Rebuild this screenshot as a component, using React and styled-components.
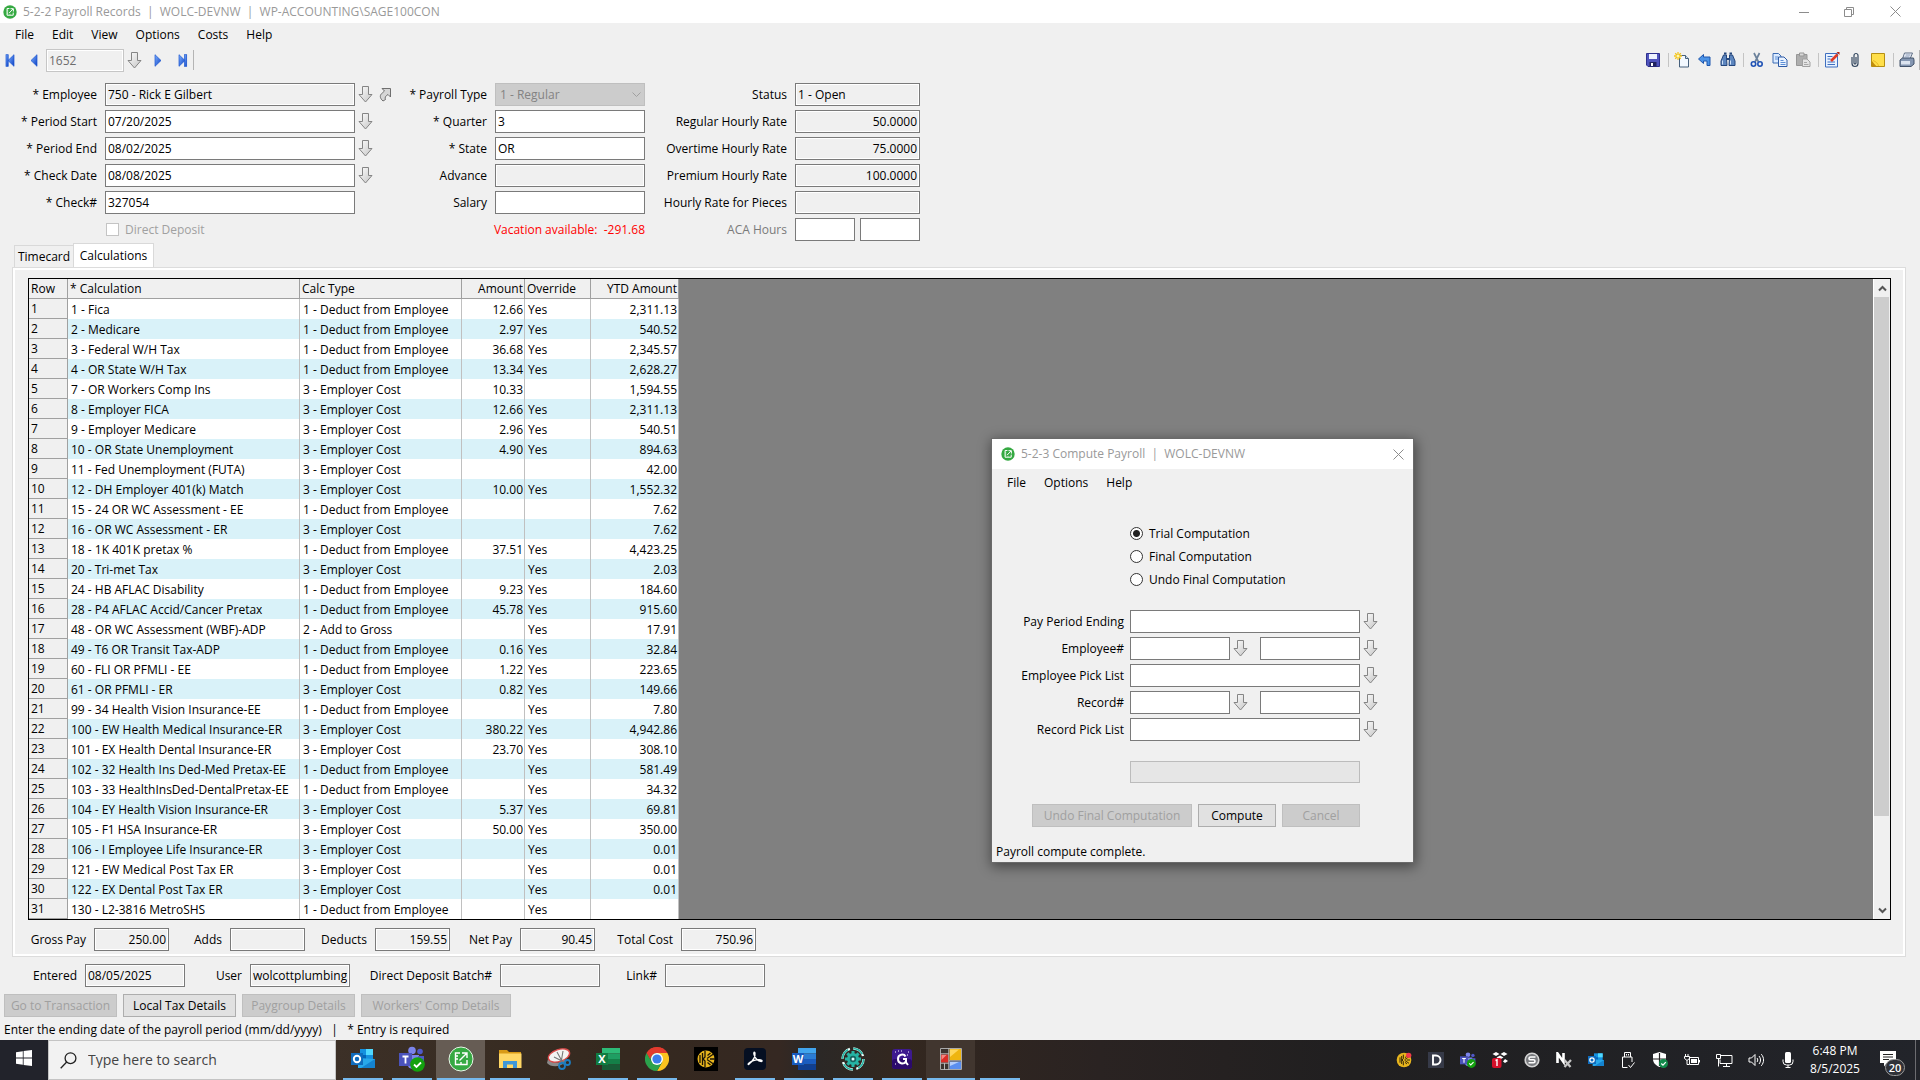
import { useState } from "react";
import styled, { createGlobalStyle } from "styled-components";

const calcTypes = {
    1: '1 - Deduct from Employee',
    2: '2 - Add to Gross',
    3: '3 - Employer Cost',
};

const calculations = [
    ['1 - Fica', 1, '12.66', 'Yes', '2,311.13'],
    ['2 - Medicare', 1, '2.97', 'Yes', '540.52'],
    ['3 - Federal W/H Tax', 1, '36.68', 'Yes', '2,345.57'],
    ['4 - OR State W/H Tax', 1, '13.34', 'Yes', '2,628.27'],
    ['7 - OR Workers Comp Ins', 3, '10.33', '', '1,594.55'],
    ['8 - Employer FICA', 3, '12.66', 'Yes', '2,311.13'],
    ['9 - Employer Medicare', 3, '2.96', 'Yes', '540.51'],
    ['10 - OR State Unemployment', 3, '4.90', 'Yes', '894.63'],
    ['11 - Fed Unemployment (FUTA)', 3, '', '', '42.00'],
    ['12 - DH Employer 401(k) Match', 3, '10.00', 'Yes', '1,552.32'],
    ['15 - 24 OR WC Assessment - EE', 1, '', '', '7.62'],
    ['16 - OR WC Assessment - ER', 3, '', '', '7.62'],
    ['18 - 1K 401K pretax %', 1, '37.51', 'Yes', '4,423.25'],
    ['20 - Tri-met Tax', 3, '', 'Yes', '2.03'],
    ['24 - HB AFLAC Disability', 1, '9.23', 'Yes', '184.60'],
    ['28 - P4 AFLAC Accid/Cancer Pretax', 1, '45.78', 'Yes', '915.60'],
    ['48 - OR WC Assessment (WBF)-ADP', 2, '', 'Yes', '17.91'],
    ['49 - T6 OR Transit Tax-ADP', 1, '0.16', 'Yes', '32.84'],
    ['60 - FLI OR PFMLI - EE', 1, '1.22', 'Yes', '223.65'],
    ['61 - OR PFMLI - ER', 3, '0.82', 'Yes', '149.66'],
    ['99 - 34 Health Vision Insurance-EE', 1, '', 'Yes', '7.80'],
    ['100 - EW Health Medical Insurance-ER', 3, '380.22', 'Yes', '4,942.86'],
    ['101 - EX Health Dental Insurance-ER', 3, '23.70', 'Yes', '308.10'],
    ['102 - 32 Health Ins Ded-Med Pretax-EE', 1, '', 'Yes', '581.49'],
    ['103 - 33 HealthInsDed-DentalPretax-EE', 1, '', 'Yes', '34.32'],
    ['104 - EY Health Vision Insurance-ER', 3, '5.37', 'Yes', '69.81'],
    ['105 - F1 HSA Insurance-ER', 3, '50.00', 'Yes', '350.00'],
    ['106 - I Employee Life Insurance-ER', 3, '', 'Yes', '0.01'],
    ['121 - EW Medical Post Tax ER', 3, '', 'Yes', '0.01'],
    ['122 - EX Dental Post Tax ER', 3, '', 'Yes', '0.01'],
    ['130 - L2-3816 MetroSHS', 1, '', 'Yes', ''],
];

const totals = [
    { id: 'gross', label: 'Gross Pay', value: '250.00', width: 58 },
    { id: 'adds', label: 'Adds', value: '', width: 45 },
    { id: 'deducts', label: 'Deducts', value: '159.55', width: 54 },
    { id: 'net', label: 'Net Pay', value: '90.45', width: 54 },
    { id: 'total', label: 'Total Cost', value: '750.96', width: 70 },
];

const GlobalStyle = createGlobalStyle`
    * {
        box-sizing: border-box;
    }

    body {
        margin: 0;
        background: #f0f0f0;
        color: #000;
        font-family: "Open Sans", "Noto Sans", sans-serif;
        font-size: 12px;
        line-height: 16px;
    }

    button, input, select {
        font: inherit;
        color: inherit;
    }
`;

/* ---------- window chrome ---------- */

const Desktop = styled.div`
    min-height: 100vh;
    display: flex;
    flex-direction: column;
`;

const Window = styled.main`
    flex: 1;
    display: flex;
    flex-direction: column;
`;

const TitleBar = styled.header`
    display: flex;
    align-items: center;
    gap: 6px;
    height: ${p => p.$height}px;
    padding-left: ${p => p.$indent}px;
    background: #fff;
    color: #999;

    h1, h2 {
        flex: 1;
        margin: 0;
        font-size: 12px;
        font-weight: 400;
        white-space: pre;
    }
`;

const Captions = styled.div`
    display: flex;
    height: 100%;
`;

const CaptionButton = styled.button`
    display: flex;
    align-items: center;
    justify-content: center;
    width: ${p => p.$width}px;
    height: 100%;
    padding: 0;
    border: 0;
    background: none;
    color: #8c8c8c;
`;

const MenuBar = styled.nav`
    display: flex;
    align-items: center;
    height: ${p => p.$height}px;
    padding-left: 6px;

    button {
        padding: 0 9px;
        border: 0;
        background: none;
    }
`;

const ToolBar = styled.div`
    display: flex;
    align-items: center;
    height: 28px;
`;

const ToolGroup = styled.div`
    display: flex;
    align-items: center;
    gap: 7px;
    height: 14px;
    padding: 0 ${p => p.$last ? 4 : 7}px 0 5px;
    border-left: ${p => p.$first ? '0' : '1px solid #c4c4c4'};
`;

const Spacer = styled.div`
    flex: 1;
`;

const IconButton = styled.button`
    display: flex;
    align-items: center;
    justify-content: center;
    flex: none;
    width: ${p => p.$width || 16}px;
    height: 18px;
    padding: 0;
    border: 0;
    background: none;
`;

const BarEdge = styled.div`
    width: 1px;
    height: 20px;
    background: #b4b4b4;
`;

/* ---------- fields ---------- */

const Field = styled.input`
    width: ${p => p.$width}px;
    height: 23px;
    flex: none;
    padding: 0 2px;
    border: 1px solid #7a7a7a;
    border-radius: 0;
    outline: 0;
    background: ${p => p.readOnly ? '#f0f0f0' : '#fff'};
    box-shadow: inset 0 0 0 1px #fff;
    text-align: ${p => p.$right ? 'right' : 'left'};

    &:disabled {
        border-color: #c6c6c6;
        background: #f0f0f0;
        color: #6d6d6d;
    }
`;

const Select = styled.select`
    width: 150px;
    height: 23px;
    padding: 0 4px;
    border: 1px solid #bfbfbf;
    border-radius: 0;
    appearance: none;
    background: #ccc;
    opacity: 1;

    &:disabled {
        color: #838383;
    }
`;

const SelectBox = styled.div`
    display: grid;

    select, svg {
        grid-area: 1 / 1;
    }

    svg {
        justify-self: end;
        align-self: center;
        margin-right: 4px;
        pointer-events: none;
    }
`;

const Form = styled.form`
    display: flex;
    align-items: flex-start;
    padding-top: 9px;
`;

const FormColumn = styled.div`
    display: grid;
    grid-template-columns: ${p => p.$label}px auto;
    grid-auto-rows: 23px;
    align-items: center;
    gap: 4px 8px;
    width: ${p => p.$width}px;
`;

const Label = styled.label`
    width: ${p => p.$width ? `${p.$width}px` : 'auto'};
    text-align: right;
    white-space: pre;
    color: ${p => p.$muted ? '#7a7a7a' : 'inherit'};
`;

const Controls = styled.div`
    display: flex;
    align-items: center;
    gap: ${p => p.$gap || 3}px;
`;

const CheckLabel = styled.label`
    grid-column: 2;
    display: flex;
    align-items: center;
    gap: 6px;
    padding-left: 1px;
    color: #a0a0a0;
`;

const CheckBox = styled.input`
    appearance: none;
    width: 13px;
    height: 13px;
    margin: 0;
    border: 1px solid #c4c4c4;
    background: #fff;
`;

const Vacation = styled.p`
    grid-column: 1 / -1;
    margin: 0;
    text-align: right;
    white-space: pre;
    color: #f00;
`;

const PushButton = styled.button`
    width: ${p => p.$width}px;
    height: 23px;
    padding: 0;
    border: 1px solid #adadad;
    background: #e1e1e1;

    &:disabled {
        border-color: #bfbfbf;
        background: #ccc;
        color: #a0a0a0;
    }
`;

/* ---------- tabs and grid ---------- */

const TabList = styled.div`
    display: flex;
    align-items: flex-end;
    height: 26px;
    padding-left: 14px;
`;

const Tab = styled.button`
    width: ${p => p.$active ? 81 : 59}px;
    height: ${p => p.$active ? 24 : 22}px;
    padding: 0;
    border: 1px solid #d9d9d9;
    border-bottom: 0;
    border-right-width: ${p => p.$active ? 1 : 0}px;
    background: ${p => p.$active ? '#fff' : '#f0f0f0'};
`;

const TabPanel = styled.section`
    margin: 0 14px 0 12px;
    padding: 10px 14px 5px 15px;
    border: 1px solid #dcdcdc;
    box-shadow: inset 0 0 0 2px #fff;
`;

const Grid = styled.div`
    display: flex;
    border: 1px solid #000;
    background: #808080;
`;

const Table = styled.table`
    flex: none;
    width: 650px;
    table-layout: fixed;
    border-spacing: 0;

    th, td {
        height: 20px;
        padding: 0 3px;
        border-right: 1px solid #c0c0c0;
        font-weight: 400;
        text-align: left;
        white-space: nowrap;
        overflow: hidden;
    }

    th {
        padding: 0 2px;
        border-right-color: #a0a0a0;
        border-bottom: 1px solid #a0a0a0;
        background: #f0f0f0;
    }

    td {
        padding-top: 2px;
        background: #fff;
    }

    tr:nth-child(even) td {
        background: #d9f2f9;
    }

    .number {
        padding-right: 1px;
        text-align: right;
    }
`;

const ScrollBar = styled.div`
    display: flex;
    flex-direction: column;
    width: 17px;
    margin-left: auto;
    border-left: 1px solid #fff;
    background: #f0f0f0;
`;

const ScrollThumb = styled.div`
    flex: 521;
    margin-right: 1px;
    background: #cdcdcd;
`;

const ScrollTrack = styled.div`
    flex: 85;
`;

const Totals = styled.div`
    display: flex;
    gap: 8px;
    align-items: center;
    margin-top: 8px;
`;

const Entry = styled.div`
    display: flex;
    gap: 8px;
    align-items: center;
    margin-top: 7px;
`;

const Actions = styled.div`
    display: flex;
    gap: 6px;
    margin-top: 7px;
    padding-left: 4px;
`;

const Status = styled.p`
    margin: 0;
    padding: 5px 4px 2px;
    white-space: pre;
`;

/* ---------- compute dialog ---------- */

const Dialog = styled.section`
    position: absolute;
    left: 992px;
    top: 439px;
    width: 421px;
    background: #f0f0f0;
    box-shadow: 0 0 0 1px #6a6a6a, 1px 3px 12px 2px rgba(0, 0, 0, 0.45);
`;

const RadioGroup = styled.div`
    margin: 25px 0 19px 138px;
`;

const RadioLabel = styled.label`
    display: flex;
    align-items: center;
    gap: 6px;
    height: 23px;
`;

const Radio = styled.input`
    appearance: none;
    width: 13px;
    height: 13px;
    margin: 0;
    border: 1px solid #333;
    border-radius: 50%;
    background: #fff;

    &:checked {
        background: radial-gradient(circle, #222 3px, #fff 4px);
    }
`;

const DialogFields = styled.div`
    display: grid;
    grid-template-columns: 132px auto;
    grid-auto-rows: 23px;
    align-items: center;
    gap: 4px 6px;
`;

const RangeGap = styled.div`
    width: 6px;
`;

const Progress = styled.div`
    width: 230px;
    height: 22px;
    margin: 20px 0 21px 138px;
    border: 1px solid #bcbcbc;
    background: #e6e6e6;
`;

const DialogActions = styled.div`
    display: flex;
    gap: 6px;
    padding-left: 40px;
    margin-bottom: 12px;
`;

/* ---------- task bar ---------- */

const TaskBar = styled.footer`
    display: flex;
    height: 40px;
    background: linear-gradient(90deg, #22232b 0, #22232b 48px, #3c3027 330px, #35291f 620px, #352822 780px, #2a2827 810px, #33271f 900px, #2a2322 1100px, #201f20 1350px, #22242a 1920px);
    color: #fff;
`;

const StartButton = styled.button`
    width: 48px;
    padding: 0;
    border: 0;
    background: none;
`;

const SearchBox = styled.label`
    display: flex;
    align-items: center;
    gap: 11px;
    width: 288px;
    padding-left: 11px;
    border: 1px solid #c4c4c4;
    background: #f2f2f2;
    color: #333;

    input {
        width: 220px;
        padding: 0;
        border: 0;
        outline: 0;
        background: none;
        font-size: 14px;
    }

    input::placeholder {
        color: #444;
        opacity: 1;
    }
`;

const AppStrip = styled.div`
    display: flex;
    padding-left: 2px;
`;

const AppButton = styled.button`
    width: 49px;
    padding: 0;
    border: 0;
    background: ${p => p.$shade || 'none'};
    display: flex;
    flex-direction: column;
    align-items: center;

    svg {
        flex: 1;
    }

    &::after {
        content: "";
        width: ${p => p.$wide ? 48 : 40}px;
        height: 2px;
        background: ${p => p.$idle ? 'transparent' : '#76b9ed'};
    }
`;

const Tray = styled.div`
    display: flex;
    margin-left: auto;
`;

const TrayButton = styled.button`
    display: flex;
    align-items: center;
    justify-content: center;
    width: 32px;
    padding: 0;
    border: 0;
    background: none;
`;

const Clock = styled.div`
    width: 62px;
    padding-top: 2px;
    text-align: center;
    line-height: 18px;
`;

const Notices = styled.button`
    position: relative;
    width: 50px;
    padding: 0;
    border: 0;
    border-right: 1px solid #6c6c70;
    margin-right: 4px;
    background: none;

    svg {
        display: block;
        margin: 0 0 2px 14px;
    }

    span {
        position: absolute;
        right: 10px;
        bottom: 4px;
        width: 20px;
        height: 17px;
        border: 1px solid #999;
        border-radius: 9px;
        background: #303238;
        font-size: 11px;
        line-height: 15px;
        font-weight: 600;
        color: #fff;
    }
`;

/* ---------- drawings ---------- */

function SageLogo({ size }) {
    return (
        <svg width={size} height={size} viewBox="0 0 24 24">
            <circle cx="12" cy="12" r="11.5" fill="#35a942" />
            <g fill="none" stroke="#fff" strokeWidth="1.7">
                <path d="M11 6H7v11.5h10.5V13" />
                <path d="M10.500 13.800 17 7M12.800 6.300h5v5" />
                <path d="M7 9h2M7 12h2M7 15h2M12 17v-2" strokeWidth="1" />
            </g>
        </svg>
    );
}

function DownArrow() {
    return (
        <svg width="15" height="17" viewBox="0 0 15 17">
            <defs>
                <linearGradient id="arrowFill" x1="0" x2="1" y1="0" y2="1">
                    <stop offset="0" stopColor="#fff" />
                    <stop offset="1" stopColor="#c4c4c4" />
                </linearGradient>
            </defs>
            <path d="M4.500.5h6v8h3.500L7.500 16 1 8.500h3.500z" fill="url(#arrowFill)" stroke="#858585" />
        </svg>
    );
}

function LinkArrow() {
    return (
        <svg width="13" height="15" viewBox="0 0 13 15">
            <path d="M3 1.500h8.500V10L9 7.500c-2.500 1.500-3.500 3-2.500 5L4 14C.5 11 .5 8 3.500 5.800L5.500 4z" fill="#d6d6d6" stroke="#6f6f6f" />
        </svg>
    );
}

function NavIcon({ kind }) {
    const back = kind === 'first' || kind === 'prev';
    const bar = kind === 'first' || kind === 'last';
    return (
        <svg width="11" height="13" viewBox="0 0 11 13">
            <defs>
                <linearGradient id="navFill" x1="0" x2="1" y1="0" y2="1">
                    <stop offset="0" stopColor="#7fb2ff" />
                    <stop offset="1" stopColor="#0b3fc4" />
                </linearGradient>
            </defs>
            <g fill="url(#navFill)" stroke="#1a55d0" strokeWidth=".7">
                <path d={back ? 'M9 .7v11.600L3 6.500z' : 'M2 .7v11.600l6-5.800z'} />
                {bar && <rect x={back ? 1 : 7.500} y=".7" width="2.200" height="11.600" />}
            </g>
        </svg>
    );
}

const toolDrawings = {
    Save: (
        <>
            <path d="M1.500 1.500h13v13H3l-1.500-1.500z" fill="#4f53bd" stroke="#2e318f" />
            <path d="M4 2h8v5H4z" fill="#eef3ff" />
            <path d="M4.500 10h7v4.500h-7z" fill="#20225f" />
            <path d="M6 11h2v3H6z" fill="#fff" />
        </>
    ),
    New: (
        <>
            <path d="M5.500 3.500h6l3 3v8.500h-9z" fill="#f2f8ff" stroke="#46607c" />
            <path d="M11.500 3.500v3h3" fill="#c6daf0" stroke="#46607c" />
            <path d="M4 0v8M0 4h8M1.200 1.200l5.600 5.600M6.800 1.200 1.200 6.800" stroke="#f3c41c" strokeWidth="1.300" />
            <circle cx="4" cy="4" r="1.500" fill="#fff7b0" />
        </>
    ),
    Undo: <path d="M1.500 7 6.500 2.500V5h6.500v8.500h-3V9H6.500v2.500z" fill="#4c93e6" stroke="#1f56ad" />,
    Find: (
        <>
            <path d="M3.500 3h3v3L7 13.500H1V9zM9.500 3h3L15 9v4.500H9L9.500 6z" fill="#5d86bf" stroke="#24467c" />
            <path d="M4 1.500h2.500M9.500 1.500H12M6.500 7h3" stroke="#24467c" strokeWidth="2" />
            <path d="M2.500 8.500v4M10.500 8.500v4" stroke="#cfe1f7" />
        </>
    ),
    Cut: (
        <>
            <path d="M5 1l4.500 9M10.500 1 6 10" stroke="#6b819b" strokeWidth="1.700" />
            <circle cx="4.500" cy="12" r="2.200" fill="none" stroke="#1f52b5" strokeWidth="1.600" />
            <circle cx="11" cy="12" r="2.200" fill="none" stroke="#1f52b5" strokeWidth="1.600" />
        </>
    ),
    Copy: (
        <>
            <path d="M1 1.500h5.500l2.500 2.500v7H1z" fill="#dcebff" stroke="#3c6cb4" />
            <path d="M6.500 5h5.500l3 3v6.500H6.500z" fill="#eaf3ff" stroke="#2e5ba6" />
            <path d="M3 5h3M3 7h3M8.500 8.500h3M8.500 10.500h5M8.500 12.500h5" stroke="#5d8fd6" />
        </>
    ),
    Paste: (
        <>
            <path d="M1.500 2.500h10.500v11H1.500z" fill="#aeaeae" stroke="#979797" />
            <path d="M4.500 1h4.500v3H4.500z" fill="#d8d8d8" stroke="#979797" />
            <path d="M7.500 7h4.500l3 3v4.500H7.500z" fill="#e4e4e4" stroke="#a0a0a0" />
            <path d="M9 10.500h3M9 12.500h4.500" stroke="#a8a8a8" />
        </>
    ),
    Note: (
        <>
            <path d="M1.500 1.500h12V15h-12z" fill="#e8f2ff" stroke="#3f6fc0" />
            <path d="M3.500 4.500h5M3.500 7h3M3.500 10h7.500M3.500 12.500h7.500" stroke="#3f6fc0" />
            <path d="M7 9l6.500-6.500" stroke="#e03a24" strokeWidth="2.600" />
            <path d="M12.500 0h3v3z" fill="#b3200f" />
        </>
    ),
    Attach: (
        <path d="M5 5v6.500a3 3 0 0 0 6 0V3.500a2 2 0 0 0-4 0V11a1 1 0 0 0 2 0V5" fill="none" stroke="#33475f" strokeWidth="1.200" />
    ),
    Sticky: (
        <>
            <path d="M1.500 1.500h13v13h-13z" fill="#ffdf4a" stroke="#b58f12" />
            <path d="M2 9c2 2 2 3.500 5 5.500H2z" fill="#c28d0c" />
            <path d="M3 8.500c3 1 5 3 5.500 5.500" fill="none" stroke="#e9b824" />
        </>
    ),
    Print: (
        <>
            <path d="M5.500 1h8l-2.500 6H3.500z" fill="#f6f9ff" stroke="#5d6d84" />
            <path d="M1 8l2.500-2h11L15 8v4l-3 2.500H1z" fill="#8496b1" stroke="#42526a" />
            <path d="M2 9h9v3.500H2z" fill="#dbe3ef" />
            <path d="M6.500 3h5M5.500 5h5" stroke="#7c8fae" />
        </>
    ),
};

function ToolIcon({ name }) {
    return (
        <IconButton type="button" title={name}>
            <svg width="16" height="16" viewBox="0 0 16 16">{toolDrawings[name]}</svg>
        </IconButton>
    );
}

function OutlookMark({ size }) {
    return (
        <svg width={size} height={size} viewBox="0 0 24 24">
            <path d="M9 2h13v13H9z" fill="#1490df" />
            <path d="M15 2h7v6h-7z" fill="#50d9ff" />
            <path d="M9 8h6v6H9z" fill="#0364b8" />
            <path d="M7 11l17 1v9H7z" fill="#28a8ea" />
            <path d="M24 12v9H10z" fill="#1483d0" />
            <path d="M0 6h12v12H0z" fill="#0f6cbd" />
            <circle cx="6" cy="12" r="3.200" fill="none" stroke="#fff" strokeWidth="1.900" />
        </svg>
    );
}

function TeamsMark({ size }) {
    return (
        <svg width={size} height={size} viewBox="0 0 26 26">
            <circle cx="13" cy="4.500" r="3.800" fill="#7b83eb" />
            <circle cx="21" cy="5.500" r="2.800" fill="#5059c9" />
            <path d="M8 9h12v8a6 6 0 0 1-12 0z" fill="#7b83eb" />
            <path d="M19 10h6v6a4 4 0 0 1-6 3z" fill="#5059c9" />
            <path d="M0 7h13v13H0z" fill="#4b53bc" />
            <path d="M3.500 10.500h6M6.500 10.500v7" stroke="#fff" strokeWidth="1.800" />
            <circle cx="18.500" cy="18.500" r="7.300" fill="#13a10e" />
            <path d="M15 18.500l2.500 2.500 4.500-4.500" fill="none" stroke="#fff" strokeWidth="1.800" />
        </svg>
    );
}

function OfficeMark({ letter, dark, colors }) {
    return (
        <svg width="24" height="22" viewBox="0 0 24 22">
            {colors.map((color, i) => (
                <rect key={color} x="6" y={i * 5.500} width="18" height="5.500" fill={color} />
            ))}
            <rect y="5" width="12" height="12" fill={dark} />
            <text x="6" y="15" fill="#fff" fontSize="11" fontWeight="700" textAnchor="middle">{letter}</text>
        </svg>
    );
}

function KeeperMark({ size, badge }) {
    return (
        <svg width={size} height={size} viewBox="0 0 24 24">
            <rect width="24" height="24" fill={badge ? 'none' : '#000'} />
            <circle cx="12" cy="12" r={badge ? 11 : 8.500} fill="#e8b51d" />
            <g stroke="#1b1507" strokeWidth="1.300" fill="none">
                <path d="M6 8v8M8.500 6v12M11 4v6l-2 2 2 2v6M13 11.500 19.500 7M13 12.500l6.500 4.500M13.500 8.500 16.500 6M13.500 15.500l3 2.500M16 12h5" />
            </g>
            {badge && <circle cx="19" cy="5" r="4" fill="#f03a4b" />}
        </svg>
    );
}

const gearTeeth = [0, 45, 90, 135, 180, 225, 270, 315];

const taskApps = [
    { name: 'Outlook', icon: <OutlookMark size={24} /> },
    { name: 'Teams', icon: <TeamsMark size={26} /> },
    {
        name: 'Sage',
        shade: '#665c54',
        wide: true,
        icon: (
            <svg width="26" height="26" viewBox="0 0 26 26">
                <circle cx="13" cy="13" r="12" fill="#35a942" stroke="#e8f4e8" />
                <path d="M12 7H7.500v11.500H19V14M11.500 14.500 18.500 7.500M14 7h5v5M7.500 10H10M7.500 13H10M13 18v-2" fill="none" stroke="#fff" strokeWidth="1.400" />
            </svg>
        ),
    },
    {
        name: 'File Explorer',
        icon: (
            <svg width="24" height="20" viewBox="0 0 24 20">
                <path d="M1 1h8l2 2h12v5H1z" fill="#d99a16" />
                <path d="M1 4.500h22.500V19H1z" fill="#ffd765" />
                <path d="M5 19v-7h14v7h-4v-3.500H9V19z" fill="#3e97d8" />
            </svg>
        ),
    },
    {
        name: 'Snipping Tool',
        idle: true,
        icon: (
            <svg width="26" height="24" viewBox="0 0 26 24">
                <path d="M2 12c4 5 12 5 17 0v3c-5 6-15 5-18 1z" fill="#8a8a8a" />
                <ellipse cx="13" cy="8.500" rx="11" ry="6" fill="#f3f3f3" stroke="#db4a4a" strokeWidth="1.400" transform="rotate(-18 13 8.500)" />
                <path d="M11 5l6 11M17 4l-2 12M8 10l10 5" stroke="#777" strokeWidth="1.100" />
                <circle cx="16" cy="19" r="3" fill="none" stroke="#1d7dc0" strokeWidth="1.800" />
                <circle cx="21.500" cy="15.500" r="2.500" fill="none" stroke="#1d7dc0" strokeWidth="1.800" />
            </svg>
        ),
    },
    { name: 'Excel', icon: <OfficeMark letter="X" dark="#107c41" colors={['#2dbb77', '#1f9e62', '#148048', '#185c37']} /> },
    {
        name: 'Chrome',
        icon: (
            <svg width="24" height="24" viewBox="0 0 24 24">
                <path d="M12 12 1.600 6A12 12 0 0 1 22.400 6z" fill="#e33b2e" />
                <path d="M12 12V6h10.400A12 12 0 0 1 12 24l5.200-9z" fill="#fcc31e" />
                <path d="M12 12l5.200 3L12 24A12 12 0 0 1 1.600 6l5.200 9z" fill="#2ba24c" />
                <path d="M1.600 6 6.800 15 12 12V6z" fill="#2ba24c" />
                <path d="M1.600 6A12 12 0 0 1 22.400 6H12a6 6 0 0 0-5.500 3.500L5 12z" fill="#e33b2e" />
                <circle cx="12" cy="12" r="6" fill="#fff" />
                <circle cx="12" cy="12" r="4.600" fill="#3b7ded" />
            </svg>
        ),
    },
    { name: 'Keeper', idle: true, icon: <KeeperMark size={24} /> },
    {
        name: 'Acrobat',
        icon: (
            <svg width="22" height="22" viewBox="0 0 22 22">
                <rect width="22" height="22" rx="4" fill="#050f22" />
                <path d="M4.500 16.500C9 13 11.500 9 11 5c-.3-1.600-1.800-.8-1 1.500 1 3.500 4 6.500 7.500 7 1.500-.5 0-2-3-1.800-4 .3-8 1.800-10 3.800-.8 1-.2 1.400.8.5" fill="none" stroke="#fff" strokeWidth="1.300" />
            </svg>
        ),
    },
    { name: 'Word', icon: <OfficeMark letter="W" dark="#185abd" colors={['#41a5ee', '#2b7cd3', '#1a5cbf', '#103f91']} /> },
    {
        name: 'Settings',
        icon: (
            <svg width="24" height="24" viewBox="0 0 24 24">
                <circle cx="12" cy="12" r="10.500" fill="none" stroke="#e9fffc" strokeWidth="2.400" strokeDasharray="13 3.500" />
                <circle cx="12" cy="12" r="10.500" fill="none" stroke="#26b3a4" strokeWidth="1.600" strokeDasharray="11 5.500" />
                <circle cx="12" cy="12" r="6" fill="#26b3a4" />
                {gearTeeth.map(deg => (
                    <rect key={deg} x="10.500" y="4" width="3" height="4" fill="#26b3a4" transform={`rotate(${deg} 12 12)`} />
                ))}
                <circle cx="12" cy="12" r="3.200" fill="#17645f" />
                <circle cx="12" cy="12" r="1.500" fill="#dff" />
            </svg>
        ),
    },
    {
        name: 'Greenshot',
        icon: (
            <svg width="20" height="20" viewBox="0 0 20 20">
                <rect width="20" height="20" rx="3" fill="#3d1a8f" />
                <rect y="10" width="20" height="10" rx="3" fill="#2b0a6b" />
                <path d="M13.500 7.500C12 4.500 6 5 6 10s5.500 5.500 8 3v-3h-3M13 12l3 4" fill="none" stroke="#fff" strokeWidth="2" />
                <path d="M3 3h1M6 2h1M16 3h1M3 15h1M15 6h1M9 2h1" stroke="#fff" />
            </svg>
        ),
    },
    {
        name: 'Accounting',
        shade: '#41362f',
        wide: true,
        icon: (
            <svg width="22" height="22" viewBox="0 0 22 22">
                <path d="M.5.5h21v21H.5z" fill="#3a332e" stroke="#a9a9a9" />
                <path d="M9.500 1H21v11H9.500z" fill="#efb50f" />
                <path d="M10 1.500h9L10 9z" fill="#ffd75b" />
                <path d="M1 6.500h7.500v8H1z" fill="#d92b25" />
                <path d="M1.500 7h5l-5 5z" fill="#f5847e" />
                <path d="M9.500 13.500H21V21H9.500z" fill="#5b8ff0" />
                <path d="M10 14h9l-9 4z" fill="#b4cdfb" />
                <path d="M8.800 0v22M0 5.800h9M0 15.200h9M9 12.800h13M4.500 15v7" stroke="#b9b9b9" />
            </svg>
        ),
    },
    { name: 'Window', icon: <svg width="20" height="20" /> },
];

const trayItems = {
    Keeper: <KeeperMark size={16} badge />,
    Dashlane: (
        <svg width="16" height="16" viewBox="0 0 16 16">
            <rect width="16" height="16" fill="#363a48" />
            <path d="M5 3.500h3a4 4 0 0 1 0 9H5z" fill="none" stroke="#fff" strokeWidth="1.900" />
        </svg>
    ),
    Teams: <TeamsMark size={16} />,
    Dropbox: (
        <svg width="16" height="16" viewBox="0 0 16 16">
            <path d="M4 0l3.500 2L4 4 .5 2zM12 0l3.500 2L12 4 8.500 2zM8 3.500 11.500 5.500 8 7.500 4.500 5.500zM13 7l3 2-3 2-2-1.500z" fill="#fff" />
            <rect y="6" width="9.500" height="10" rx="2" fill="#d5102a" />
            <path d="M3.500 8.500 5 7.800V14" fill="none" stroke="#fff" strokeWidth="1.400" />
        </svg>
    ),
    Sync: (
        <svg width="16" height="16" viewBox="0 0 16 16">
            <circle cx="8" cy="8" r="6.800" fill="#77797d" stroke="#d4d4d4" strokeWidth="1.600" />
            <path d="M11.500 5H6.500c-2 0-2 2.800 0 2.800h3c2 0 2 3 0 3h-5" fill="none" stroke="#fff" strokeWidth="1.600" />
        </svg>
    ),
    Nx: (
        <svg width="16" height="16" viewBox="0 0 16 16">
            <path d="M1.500 11V1.500L7.500 10V1" fill="none" stroke="#fff" strokeWidth="2.600" />
            <path d="M8.500 8l6 7M15 8l-6.500 7" stroke="#c6c6c6" strokeWidth="2.200" />
        </svg>
    ),
    Outlook: <OutlookMark size={16} />,
    Usb: (
        <svg width="14" height="18" viewBox="0 0 14 18" fill="none" stroke="#fff">
            <path d="M3.500 6V1.500h6V6M1.500 6h9.500v5M1.500 6v10.500h5M5.500 3v1.500M7.500 3v1.500M7.500 14l2 2.500 4-5" />
        </svg>
    ),
    Security: (
        <svg width="16" height="16" viewBox="0 0 16 16">
            <path d="M7.500 0 14 2v5c0 4-3 6.500-6.500 8C4 13.500 1 11 1 7V2z" fill="#fff" />
            <path d="M7.500 1v13M1 7h13" stroke="#222" strokeWidth="1.200" />
            <circle cx="11.500" cy="11.500" r="4.500" fill="#128a4b" />
            <path d="M9.300 11.500l1.700 1.700 2.800-3" fill="none" stroke="#fff" strokeWidth="1.200" />
        </svg>
    ),
    Battery: (
        <svg width="16" height="14" viewBox="0 0 16 14" fill="none" stroke="#fff">
            <path d="M5.500 4.500h9v7h-9zM15.500 7v2.500M1.500 1v2.500M4 1v2.500M.5 3.500h5v2L3.500 7H2.500L.5 5.500zM3 7v4.500h2" />
            <path d="M7 6h6v4H7z" fill="#fff" stroke="none" />
        </svg>
    ),
    Network: (
        <svg width="17" height="15" viewBox="0 0 17 15" fill="none" stroke="#fff">
            <path d="M5 2.500h11v8H4V6.500M.5 1.500h4v4h-4zM2.500 5.500v8M7 13.500h7M10.500 10.500v3" />
        </svg>
    ),
    Volume: (
        <svg width="17" height="14" viewBox="0 0 17 14" fill="none" stroke="#fff">
            <path d="M1 5h2.500L7 1.500v11L3.500 9H1zM9 5c1 1.200 1 2.800 0 4M11 3c2 2.500 2 5.500 0 8M13.300 1.200c3 3.500 3 8 0 11.600" />
        </svg>
    ),
    Microphone: (
        <svg width="12" height="16" viewBox="0 0 12 16">
            <rect x="3" y="0" width="6" height="11" rx="1.500" fill="#fff" />
            <path d="M1 7.500v2A3.500 3.500 0 0 0 4.500 13h3A3.500 3.500 0 0 0 11 9.500v-2M6 13v2.500M3.500 15.500h5" fill="none" stroke="#fff" />
        </svg>
    ),
};

function CloseMark() {
    return (
        <svg width="11" height="11" viewBox="0 0 11 11" stroke="currentColor">
            <path d="M.5.5l10 10M10.500.5l-10 10" />
        </svg>
    );
}

/* ---------- parts ---------- */

function Lookup({ title }) {
    return (
        <IconButton type="button" title={title} $width={15}>
            <DownArrow />
        </IconButton>
    );
}

function TextRow({ id, label, value, width, right, readOnly, lookup, children }) {
    return (
        <>
            <Label htmlFor={id}>{label}</Label>
            <Controls>
                <Field id={id} defaultValue={value} readOnly={readOnly} $width={width} $right={right} />
                {lookup && <Lookup title={`${label} lookup`} />}
                {children}
            </Controls>
        </>
    );
}

function RecordForm() {
    return (
        <Form>
            <FormColumn $label={97} $width={394}>
                <TextRow id="employee" label="* Employee" value="750 - Rick E Gilbert" width={250} readOnly lookup>
                    <IconButton type="button" title="Open employee" $width={18}><LinkArrow /></IconButton>
                </TextRow>
                <TextRow id="start" label="* Period Start" value="07/20/2025" width={250} lookup />
                <TextRow id="end" label="* Period End" value="08/02/2025" width={250} lookup />
                <TextRow id="checkDate" label="* Check Date" value="08/08/2025" width={250} lookup />
                <TextRow id="check" label="* Check#" value="327054" width={250} />
                <CheckLabel>
                    <CheckBox type="checkbox" disabled />
                    Direct Deposit
                </CheckLabel>
            </FormColumn>
            <FormColumn $label={93} $width={251}>
                <Label htmlFor="payrollType">* Payroll Type</Label>
                <SelectBox>
                    <Select id="payrollType" disabled>
                        <option>1 - Regular</option>
                    </Select>
                    <svg width="9" height="6" viewBox="0 0 9 6" fill="none" stroke="#a0a0a0">
                        <path d="M.5.5l4 4 4-4" />
                    </svg>
                </SelectBox>
                <TextRow id="quarter" label="* Quarter" value="3" width={150} />
                <TextRow id="state" label="* State" value="OR" width={150} />
                <TextRow id="advance" label="Advance" width={150} readOnly />
                <TextRow id="salary" label="Salary" width={150} />
                <Vacation>{'Vacation available:  -291.68'}</Vacation>
            </FormColumn>
            <FormColumn $label={142} $width={275}>
                <TextRow id="status" label="Status" value="1 - Open" width={125} readOnly />
                <TextRow id="regular" label="Regular Hourly Rate" value="50.0000" width={125} readOnly right />
                <TextRow id="overtime" label="Overtime Hourly Rate" value="75.0000" width={125} readOnly right />
                <TextRow id="premium" label="Premium Hourly Rate" value="100.0000" width={125} readOnly right />
                <TextRow id="pieces" label="Hourly Rate for Pieces" width={125} readOnly />
                <Label htmlFor="aca1" $muted>ACA Hours</Label>
                <Controls $gap={5}>
                    <Field id="aca1" $width={60} />
                    <Field aria-label="ACA Hours 2" $width={60} />
                </Controls>
            </FormColumn>
        </Form>
    );
}

function CalculationGrid() {
    return (
        <Grid>
            <Table>
                <colgroup>
                    <col width="39" />
                    <col width="232" />
                    <col width="162" />
                    <col width="63" />
                    <col width="66" />
                    <col width="88" />
                </colgroup>
                <thead>
                    <tr>
                        <th>Row</th>
                        <th>* Calculation</th>
                        <th>Calc Type</th>
                        <th className="number">Amount</th>
                        <th>Override</th>
                        <th className="number">YTD Amount</th>
                    </tr>
                </thead>
                <tbody>
                    {calculations.map(([name, type, amount, override, ytd], i) => (
                        <tr key={name}>
                            <th scope="row">{i + 1}</th>
                            <td>{name}</td>
                            <td>{calcTypes[type]}</td>
                            <td className="number">{amount}</td>
                            <td>{override}</td>
                            <td className="number">{ytd}</td>
                        </tr>
                    ))}
                </tbody>
            </Table>
            <ScrollBar>
                <IconButton type="button" title="Scroll up">
                    <svg width="9" height="7" viewBox="0 0 9 7" fill="none" stroke="#555" strokeWidth="2">
                        <path d="M1 5.500l3.500-3.500L8 5.500" />
                    </svg>
                </IconButton>
                <ScrollThumb />
                <ScrollTrack />
                <IconButton type="button" title="Scroll down">
                    <svg width="9" height="7" viewBox="0 0 9 7" fill="none" stroke="#555" strokeWidth="2">
                        <path d="M1 1.500l3.500 3.500L8 1.500" />
                    </svg>
                </IconButton>
            </ScrollBar>
        </Grid>
    );
}

function ComputeDialog() {
    const [mode, setMode] = useState('Trial Computation');
    const modes = ['Trial Computation', 'Final Computation', 'Undo Final Computation'];

    return (
        <Dialog role="dialog" aria-labelledby="computeTitle">
            <TitleBar $height={30} $indent={9}>
                <SageLogo size={14} />
                <h2 id="computeTitle">{'5-2-3 Compute Payroll  |  WOLC-DEVNW'}</h2>
                <CaptionButton title="Close" $width={30}><CloseMark /></CaptionButton>
            </TitleBar>
            <MenuBar $height={28}>
                <button>File</button>
                <button>Options</button>
                <button>Help</button>
            </MenuBar>
            <RadioGroup>
                {modes.map(item => (
                    <RadioLabel key={item}>
                        <Radio type="radio" name="mode" checked={mode === item} onChange={() => setMode(item)} />
                        {item}
                    </RadioLabel>
                ))}
            </RadioGroup>
            <DialogFields>
                <TextRow id="payPeriod" label="Pay Period Ending" width={230} lookup />
                <TextRow id="employeeNo" label="Employee#" width={100} lookup>
                    <RangeGap />
                    <Field aria-label="Employee# to" $width={100} />
                    <Lookup title="Employee# to lookup" />
                </TextRow>
                <TextRow id="employeePick" label="Employee Pick List" width={230} lookup />
                <TextRow id="recordNo" label="Record#" width={100} lookup>
                    <RangeGap />
                    <Field aria-label="Record# to" $width={100} />
                    <Lookup title="Record# to lookup" />
                </TextRow>
                <TextRow id="recordPick" label="Record Pick List" width={230} lookup />
            </DialogFields>
            <Progress />
            <DialogActions>
                <PushButton $width={160} disabled>Undo Final Computation</PushButton>
                <PushButton $width={78}>Compute</PushButton>
                <PushButton $width={78} disabled>Cancel</PushButton>
            </DialogActions>
            <Status>Payroll compute complete.</Status>
        </Dialog>
    );
}

function WindowsTaskBar() {
    return (
        <TaskBar>
            <StartButton title="Start">
                <svg width="16" height="16" viewBox="0 0 16 16" fill="#fff">
                    <path d="M0 2.200 6.800 1.200v6.400H0zM7.600 1.100 16 0v7.600H7.600zM0 8.400h6.800v6.400L0 13.800zM7.600 8.400H16V16l-8.400-1.100z" />
                </svg>
            </StartButton>
            <SearchBox>
                <svg width="17" height="17" viewBox="0 0 17 17" fill="none" stroke="#222" strokeWidth="1.300">
                    <circle cx="10.500" cy="6.200" r="5.400" />
                    <path d="M6.700 10 .7 16.200" />
                </svg>
                <input aria-label="Search" placeholder="Type here to search" />
            </SearchBox>
            <AppStrip>
                {taskApps.map(app => (
                    <AppButton key={app.name} title={app.name} $shade={app.shade} $wide={app.wide} $idle={app.idle}>
                        {app.icon}
                    </AppButton>
                ))}
            </AppStrip>
            <Tray>
                {Object.entries(trayItems).map(([name, icon]) => (
                    <TrayButton key={name} title={name}>{icon}</TrayButton>
                ))}
                <Clock>
                    6:48 PM<br />8/5/2025
                </Clock>
                <Notices title="Notifications">
                    <svg width="16" height="16" viewBox="0 0 16 16">
                        <path d="M0 0h16v12H7l-3 3.500V12H0z" fill="#fff" />
                        <path d="M3 3.500h10M3 6h10M3 8.500h6" stroke="#222" />
                    </svg>
                    <span>20</span>
                </Notices>
            </Tray>
        </TaskBar>
    );
}

export default function App() {
    const [tab, setTab] = useState('Calculations');

    return (
        <Desktop>
            <GlobalStyle />
            <Window>
                <TitleBar $height={23} $indent={3}>
                    <SageLogo size={14} />
                    <h1>{'5-2-2 Payroll Records  |  WOLC-DEVNW  |  WP-ACCOUNTING\\SAGE100CON'}</h1>
                    <Captions>
                        <CaptionButton title="Minimize" $width={48}>
                            <svg width="10" height="10" viewBox="0 0 10 10" stroke="currentColor"><path d="M0 5.500h10" /></svg>
                        </CaptionButton>
                        <CaptionButton title="Restore" $width={42}>
                            <svg width="10" height="10" viewBox="0 0 10 10" fill="none" stroke="currentColor">
                                <path d="M.5 2.500h7v7h-7zM2.500 2V.5h7v7H8" />
                            </svg>
                        </CaptionButton>
                        <CaptionButton title="Close" $width={50}><CloseMark /></CaptionButton>
                    </Captions>
                </TitleBar>
                <MenuBar $height={23}>
                    <button>File</button>
                    <button>Edit</button>
                    <button>View</button>
                    <button>Options</button>
                    <button>Costs</button>
                    <button>Help</button>
                </MenuBar>
                <ToolBar>
                    <IconButton title="First" $width={20}><NavIcon kind="first" /></IconButton>
                    <IconButton title="Previous" $width={26}><NavIcon kind="prev" /></IconButton>
                    <Field aria-label="Record" defaultValue="1652" disabled $width={78} />
                    <IconButton title="Record lookup" $width={21}><DownArrow /></IconButton>
                    <IconButton title="Next" $width={26}><NavIcon kind="next" /></IconButton>
                    <IconButton title="Last" $width={22}><NavIcon kind="last" /></IconButton>
                    <BarEdge />
                    <Spacer />
                    <ToolGroup $first>
                        <ToolIcon name="Save" />
                    </ToolGroup>
                    <ToolGroup>
                        <ToolIcon name="New" />
                        <ToolIcon name="Undo" />
                        <ToolIcon name="Find" />
                    </ToolGroup>
                    <ToolGroup>
                        <ToolIcon name="Cut" />
                        <ToolIcon name="Copy" />
                        <ToolIcon name="Paste" />
                    </ToolGroup>
                    <ToolGroup>
                        <ToolIcon name="Note" />
                        <ToolIcon name="Attach" />
                        <ToolIcon name="Sticky" />
                    </ToolGroup>
                    <ToolGroup $last>
                        <ToolIcon name="Print" />
                    </ToolGroup>
                    <BarEdge />
                </ToolBar>
                <RecordForm />
                <TabList role="tablist">
                    {['Timecard', 'Calculations'].map(name => (
                        <Tab key={name} role="tab" aria-selected={tab === name} $active={tab === name} onClick={() => setTab(name)}>
                            {name}
                        </Tab>
                    ))}
                </TabList>
                <TabPanel>
                    <CalculationGrid />
                    <Totals>
                        {totals.map(({ id, label, value, width }) => (
                            <Controls key={id} $gap={8}>
                                <Label htmlFor={id} $width={width}>{label}</Label>
                                <Field id={id} defaultValue={value} readOnly $width={75} $right />
                            </Controls>
                        ))}
                    </Totals>
                </TabPanel>
                <Entry>
                    <Label htmlFor="entered" $width={77}>Entered</Label>
                    <Field id="entered" defaultValue="08/05/2025" readOnly $width={100} />
                    <Label htmlFor="user" $width={49}>User</Label>
                    <Field id="user" defaultValue="wolcottplumbing\" readOnly $width={100} />
                    <Label htmlFor="batch" $width={134}>Direct Deposit Batch#</Label>
                    <Field id="batch" readOnly $width={100} />
                    <Label htmlFor="link" $width={49}>Link#</Label>
                    <Field id="link" readOnly $width={100} />
                </Entry>
                <Actions>
                    <PushButton $width={113} disabled>Go to Transaction</PushButton>
                    <PushButton $width={113}>Local Tax Details</PushButton>
                    <PushButton $width={113} disabled>Paygroup Details</PushButton>
                    <PushButton $width={150} disabled>Workers' Comp Details</PushButton>
                </Actions>
                <Status>{'Enter the ending date of the payroll period (mm/dd/yyyy)   |   * Entry is required'}</Status>
            </Window>
            <WindowsTaskBar />
            <ComputeDialog />
        </Desktop>
    );
}
